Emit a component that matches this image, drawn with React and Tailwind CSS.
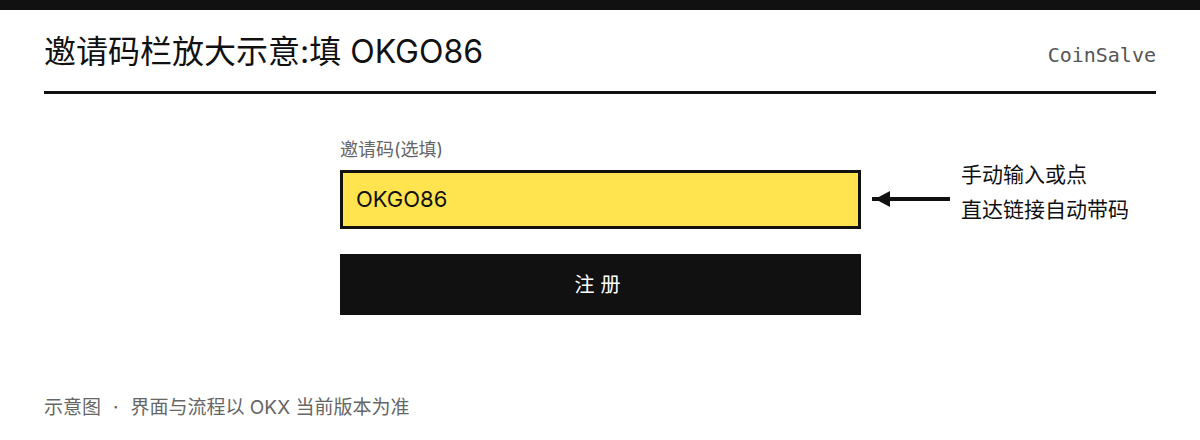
const sans = "font-['Inter','Noto_Sans_CJK_SC',sans-serif]";

export default function App() {
  return (
    <div className={`w-[1200px] h-[440px] bg-white text-[#111] ${sans}`}>
      <div className="h-[10px] bg-[#111]" />

      {/* header */}
      <div className="mx-[44px] flex items-end justify-between border-b-[3px] border-[#111] pt-[20px] pb-[17px]">
        <h1 className="text-[32px] leading-[44px] font-normal">邀请码栏放大示意:填 OKGO86</h1>
        <span className="mb-[4px] font-['DejaVu_Sans_Mono',monospace] text-[20px] text-[#555]">CoinSalve</span>
      </div>

      {/* form */}
      <div className="mt-[44px] flex">
        <div className="ml-[340px] w-[521px]">
          <div className="text-[18px] leading-[24px] text-[#666]">邀请码(选填)</div>
          <div className="mt-[8px] flex h-[59px] items-center border-[3px] border-[#111] bg-[#ffe34f] px-[13px] text-[22px]">
            OKGO86
          </div>
          <button className="mt-[25px] flex h-[61px] w-full items-center justify-center bg-[#111] text-[20px] text-white tracking-[6px]">
            注册
          </button>
        </div>

        <div className="ml-[10px] flex items-start pt-[19px]">
          <svg width="80" height="20" viewBox="0 0 80 20" className="mt-[32px]">
            <line x1="1" y1="10" x2="79" y2="10" stroke="#111" strokeWidth="4" />
            <polygon points="4,10 19,2 19,18" fill="#111" />
          </svg>
          <div className="ml-[10px] text-[21px] leading-[35px]">
            <div>手动输入或点</div>
            <div>直达链接自动带码</div>
          </div>
        </div>
      </div>

      {/* footnote */}
      <div className="mx-[44px] mt-[79px] flex text-[19px] text-[#666]">
        <span>示意图</span>
        <span className="mx-[12px]">·</span>
        <span>界面与流程以 OKX 当前版本为准</span>
      </div>
    </div>
  );
}
